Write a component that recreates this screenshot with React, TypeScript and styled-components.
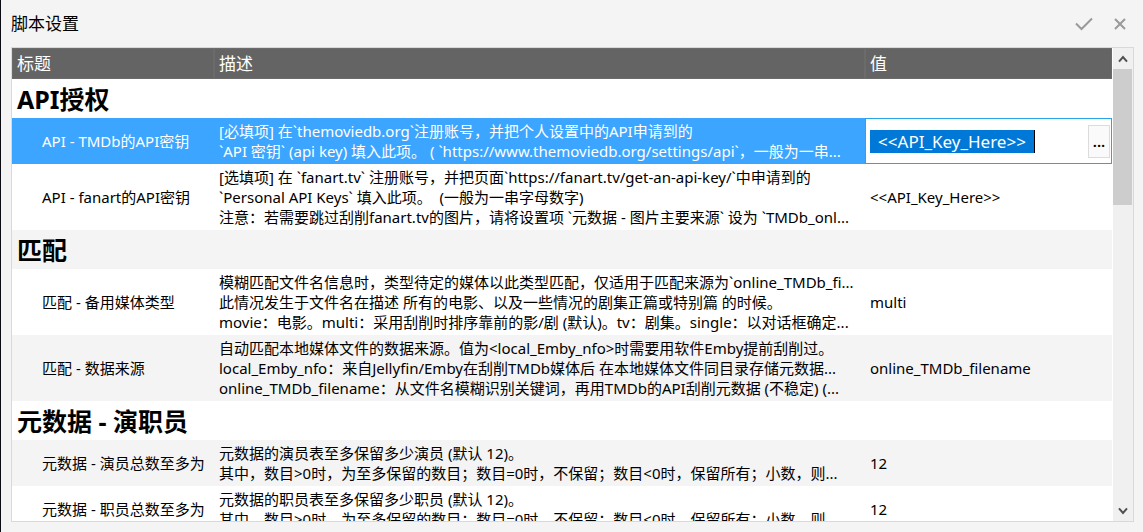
import React from "react";
import styled, { createGlobalStyle } from "styled-components";

const GlobalStyle = createGlobalStyle`
  * { box-sizing: border-box; }
  body {
    margin: 0;
    background: #f4f4f4;
    color: #000;
    font-family: "Noto Sans", "Noto Sans CJK SC", sans-serif;
    font-size: 15px;
    line-height: 20px;
  }
`;

const Dialog = styled.main`
  display: flex;
  flex-direction: column;
  height: 100vh;
  padding: 0 9px 10px 10px;
  border-left: 1px solid #0c0c14;
`;

const TitleBar = styled.header`
  display: flex;
  align-items: center;
  justify-content: space-between;
  flex: none;
  height: 47px;
`;

const Title = styled.h1`
  margin: 0;
  font-size: 17px;
  font-weight: 400;
  line-height: 24px;
`;

const Actions = styled.div`
  display: flex;
  gap: 12px;
  padding-right: 2px;
`;

const IconButton = styled.button`
  display: flex;
  align-items: center;
  justify-content: center;
  width: 24px;
  height: 24px;
  padding: 0;
  border: 0;
  background: none;
  color: #999;
`;

const Panel = styled.section`
  display: flex;
  flex: 1;
  min-height: 0;
  overflow: hidden;
  border: 1px solid #d9d9d9;
  background: #fff;
`;

const Viewport = styled.div`
  flex: 1;
  min-width: 0;
  overflow: hidden;
`;

const Table = styled.table`
  width: 100%;
  table-layout: fixed;
  border-collapse: separate;
  border-spacing: 0;
`;

const Column = styled.col<{ $width?: string }>`
  width: ${(p) => p.$width ?? "auto"};
`;

const HeadCell = styled.th`
  height: 31px;
  padding: 0 4px;
  background: #646464;
  border: 1px solid #6b6b6b;
  color: #fff;
  font-size: 17px;
  font-weight: 400;
  line-height: 24px;
  text-align: left;
`;

const SectionCell = styled.th<{ $shaded?: boolean }>`
  height: 39px;
  padding: 0 5px;
  background: ${(p) => (p.$shaded ? "#f4f4f4" : "#fff")};
  font-size: 25px;
  font-weight: 700;
  line-height: 36px;
  text-align: left;
`;

type Tone = "plain" | "shaded" | "selected";

const Row = styled.tr<{ $tone: Tone }>`
  background: ${(p) => ({ plain: "#fff", shaded: "#f4f4f4", selected: "#3ca5ff" })[p.$tone]};
  color: ${(p) => (p.$tone === "selected" ? "#fff" : "#000")};
`;

const NameCell = styled.th`
  padding: 0 0 0 30px;
  font-weight: 400;
  text-align: left;
  white-space: nowrap;
`;

const TextCell = styled.td`
  padding: 3px 5px;
  white-space: pre;
`;

const Line = styled.div`
  overflow: hidden;
  height: 20px;
`;

const EditCell = styled.td`
  padding: 0 1px 0 4px;
  border: 1px solid #28a5e6;
  background: #fff;
`;

const Editor = styled.div`
  display: flex;
  align-items: center;
  justify-content: space-between;
`;

const ValueInput = styled.input`
  width: 165px;
  height: 23px;
  padding: 0;
  border: 0;
  border-right: 1px solid #000;
  outline: 0;
  background: #0078d7;
  color: #fff;
  font: inherit;
  font-size: 17px;
  line-height: 23px;
  text-align: center;
`;

const BrowseButton = styled.button`
  width: 22px;
  height: 33px;
  padding: 0;
  border: 1px solid #dcdcdc;
  background: #fafafa;
  color: #000;
  font: inherit;
  font-weight: 600;
`;

const ScrollBar = styled.div`
  display: flex;
  flex-direction: column;
  flex: none;
  width: 21px;
  padding-right: 1px;
  border-left: 1px solid #fff;
  background: #f0f0f0;
`;

const ScrollButton = styled.button`
  display: flex;
  align-items: center;
  justify-content: center;
  flex: none;
  height: 21px;
  padding: 0;
  border: 0;
  background: #f0f0f0;
  color: #505050;
`;

const Track = styled.div`
  flex: 1;
`;

const Thumb = styled.div`
  height: 136px;
  background: #cdcdcd;
`;

interface Setting {
  name: string;
  lines: string[];
  value: string;
  tone: Tone;
  editing?: boolean;
}

interface Group {
  title: string;
  shaded?: boolean;
  settings: Setting[];
}

const groups: Group[] = [
  {
    title: "API授权",
    settings: [
      {
        name: "API - TMDb的API密钥",
        lines: [
          "[必填项] 在`themoviedb.org`注册账号，并把个人设置中的API申请到的",
          "`API 密钥` (api key) 填入此项。 ( `https://www.themoviedb.org/settings/api`，一般为一串...",
        ],
        value: "<<API_Key_Here>>",
        tone: "selected",
        editing: true,
      },
      {
        name: "API - fanart的API密钥",
        lines: [
          "[选填项] 在 `fanart.tv` 注册账号，并把页面`https://fanart.tv/get-an-api-key/`中申请到的",
          "`Personal API Keys` 填入此项。  (一般为一串字母数字)",
          "注意：若需要跳过刮削fanart.tv的图片，请将设置项 `元数据 - 图片主要来源` 设为 `TMDb_onl...",
        ],
        value: "<<API_Key_Here>>",
        tone: "plain",
      },
    ],
  },
  {
    title: "匹配",
    shaded: true,
    settings: [
      {
        name: "匹配 - 备用媒体类型",
        lines: [
          "模糊匹配文件名信息时，类型待定的媒体以此类型匹配，仅适用于匹配来源为`online_TMDb_fi...",
          "此情况发生于文件名在描述 所有的电影、以及一些情况的剧集正篇或特别篇 的时候。",
          "movie：电影。multi：采用刮削时排序靠前的影/剧 (默认)。tv：剧集。single：以对话框确定...",
        ],
        value: "multi",
        tone: "plain",
      },
      {
        name: "匹配 - 数据来源",
        lines: [
          "自动匹配本地媒体文件的数据来源。值为<local_Emby_nfo>时需要用软件Emby提前刮削过。",
          "local_Emby_nfo：来自Jellyfin/Emby在刮削TMDb媒体后 在本地媒体文件同目录存储元数据...",
          "online_TMDb_filename：从文件名模糊识别关键词，再用TMDb的API刮削元数据 (不稳定) (...",
        ],
        value: "online_TMDb_filename",
        tone: "shaded",
      },
    ],
  },
  {
    title: "元数据 - 演职员",
    settings: [
      {
        name: "元数据 - 演员总数至多为",
        lines: [
          "元数据的演员表至多保留多少演员 (默认 12)。",
          "其中，数目>0时，为至多保留的数目；数目=0时，不保留；数目<0时，保留所有；小数，则...",
        ],
        value: "12",
        tone: "shaded",
      },
      {
        name: "元数据 - 职员总数至多为",
        lines: [
          "元数据的职员表至多保留多少职员 (默认 12)。",
          "其中，数目>0时，为至多保留的数目；数目=0时，不保留；数目<0时，保留所有；小数，则...",
        ],
        value: "12",
        tone: "plain",
      },
    ],
  },
];

function SettingRow({ setting }: { setting: Setting }) {
  return (
    <Row $tone={setting.tone}>
      <NameCell scope="row">{setting.name}</NameCell>
      <TextCell>
        {setting.lines.map((line) => (
          <Line key={line}>{line}</Line>
        ))}
      </TextCell>
      {setting.editing ? (
        <EditCell>
          <Editor>
            <ValueInput aria-label={setting.name} defaultValue={setting.value} />
            <BrowseButton type="button">...</BrowseButton>
          </Editor>
        </EditCell>
      ) : (
        <TextCell>{setting.value}</TextCell>
      )}
    </Row>
  );
}

function Arrow({ down = false }: { down?: boolean }) {
  return (
    <svg width="10" height="8" viewBox="0 0 10 8" fill="none" stroke="currentColor" strokeWidth="2">
      <path d={down ? "M1 1.4 5 6 9 1.4" : "M1 6.6 5 2 9 6.6"} />
    </svg>
  );
}

export default function App() {
  return (
    <>
      <GlobalStyle />
      <Dialog lang="zh-CN">
        <TitleBar>
          <Title>脚本设置</Title>
          <Actions>
            <IconButton type="button" aria-label="确定">
              <svg width="18" height="14" viewBox="0 0 18 14" fill="none" stroke="currentColor" strokeWidth="2">
                <path d="M1 6.5 6.5 12 17 1.5" />
              </svg>
            </IconButton>
            <IconButton type="button" aria-label="关闭">
              <svg width="12" height="12" viewBox="0 0 12 12" fill="none" stroke="currentColor" strokeWidth="2">
                <path d="M1 1 11 11M11 1 1 11" />
              </svg>
            </IconButton>
          </Actions>
        </TitleBar>
        <Panel>
          <Viewport>
            <Table>
              <colgroup>
                <Column $width="202px" />
                <Column />
                <Column $width="247px" />
              </colgroup>
              <thead>
                <tr>
                  <HeadCell scope="col">标题</HeadCell>
                  <HeadCell scope="col">描述</HeadCell>
                  <HeadCell scope="col">值</HeadCell>
                </tr>
              </thead>
              {groups.map((group) => (
                <tbody key={group.title}>
                  <tr>
                    <SectionCell colSpan={3} scope="rowgroup" $shaded={group.shaded}>
                      {group.title}
                    </SectionCell>
                  </tr>
                  {group.settings.map((setting) => (
                    <SettingRow key={setting.name} setting={setting} />
                  ))}
                </tbody>
              ))}
            </Table>
          </Viewport>
          <ScrollBar>
            <ScrollButton type="button" aria-label="向上滚动">
              <Arrow />
            </ScrollButton>
            <Track>
              <Thumb />
            </Track>
            <ScrollButton type="button" aria-label="向下滚动">
              <Arrow down />
            </ScrollButton>
          </ScrollBar>
        </Panel>
      </Dialog>
    </>
  );
}
